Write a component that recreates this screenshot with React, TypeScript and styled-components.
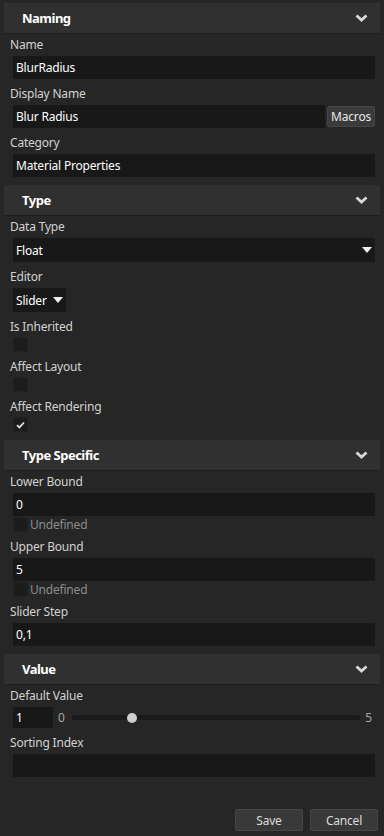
import React from 'react'
import styled, { createGlobalStyle } from 'styled-components'

const GlobalStyle = createGlobalStyle`
  html, body {
    margin: 0;
    padding: 0;
    background: #262626;
  }
  body {
    font-family: "Noto Sans", "Open Sans", sans-serif;
    font-size: 12px;
    letter-spacing: -0.2px;
    color: #d0d0d0;
  }
`

const Page = styled.div`
  width: 384px;
  min-height: 836px;
  box-sizing: border-box;
  padding: 3px 4px 0 4px;
  display: flex;
  flex-direction: column;
`
const SectionHeader = styled.div`
  height: 31px;
  box-sizing: border-box;
  background: #303030;
  border-bottom: 1px solid #1e1e1e;
  display: flex;
  align-items: center;
  justify-content: space-between;
  padding: 0 12px 0 18px;
  color: #fff;
  font-size: 13px;
  font-weight: 700;
  letter-spacing: -0.5px;
`
const SectionBody = styled.div`
  display: flex;
  flex-direction: column;
  gap: 5px;
  padding: 1px 5px 8px 6px;
`
const Field = styled.div`
  display: flex;
  flex-direction: column;
`
const Label = styled.div<{ $tight?: boolean }>`
  line-height: 17px;
  height: 17px;
  padding-top: 1px;
  box-sizing: border-box;
  margin-bottom: ${(p) => (p.$tight ? 3 : 4)}px;
  color: #d2d2d2;
  white-space: nowrap;
`
const Row = styled.div`
  display: flex;
  align-items: center;
  margin-left: 3px;
`
const TextBox = styled.div<{ $width?: number }>`
  height: 23px;
  box-sizing: border-box;
  background: #181818;
  color: #fff;
  padding: 0 3px;
  display: flex;
  align-items: center;
  flex: ${(p) => (p.$width ? `0 0 ${p.$width}px` : '1')};
`
const Select = styled(TextBox)`
  height: 24px;
  justify-content: space-between;
  padding-right: 3px;
`
const Caret = styled.span`
  width: 0;
  height: 0;
  border-left: 5px solid transparent;
  border-right: 5px solid transparent;
  border-top: 6px solid #f0f0f0;
  margin-left: 6px;
`
const SmallButton = styled.button`
  height: 21px;
  margin-left: 2px;
  padding: 0 3px;
  background: #3a3a3a;
  border: 1px solid #464646;
  border-radius: 2px;
  color: #e8e8e8;
  font-family: inherit;
  font-size: 12px;
  letter-spacing: inherit;
`
const Check = styled.div`
  width: 15px;
  height: 15px;
  box-sizing: border-box;
  background: #1c1c1c;
  border: 1px solid #222;
  display: flex;
  align-items: center;
  justify-content: center;
  flex: 0 0 auto;
`
const CheckRow = styled(Row)`
  margin-top: 1px;
  gap: 2px;
`
const Hint = styled.span`
  color: #8c8c8c;
  line-height: 15px;
`
const SliderRow = styled(Row)`
  height: 21px;
`
const SliderEnd = styled.span<{ $end?: boolean }>`
  color: #a8a8a8;
  padding: ${(p) => (p.$end ? '0 3px 0 5px' : '0 7px 0 5px')};
`
const Track = styled.div`
  flex: 1;
  height: 5px;
  border-radius: 3px;
  background: #1a1a1a;
  position: relative;
`
const Thumb = styled.div`
  position: absolute;
  top: 50%;
  width: 10px;
  height: 10px;
  border-radius: 50%;
  background: #cfcfcf;
  transform: translate(-50%, -50%);
`
const Spacer = styled.div`
  flex: 1;
`
const Footer = styled.div`
  display: flex;
  justify-content: flex-end;
  gap: 7px;
  padding: 0 2px 5px 0;
`
const FooterButton = styled.button`
  width: 68px;
  height: 22px;
  background: #393939;
  border: 1px solid #454545;
  border-radius: 2px;
  color: #dcdcdc;
  font-family: inherit;
  font-size: 12px;
  letter-spacing: inherit;
`

const Chevron = () => (
  <svg width="13" height="8" viewBox="0 0 13 8">
    <path d="M1.5 1.5 L6.5 6 L11.5 1.5" fill="none" stroke="#d8d8d8" strokeWidth="2.8" />
  </svg>
)

const Tick = () => (
  <svg width="9" height="8" viewBox="0 0 9 8">
    <path d="M1 4.2 L3.4 6.4 L8 1.5" fill="none" stroke="#e0e0e0" strokeWidth="1.8" />
  </svg>
)

const Section: React.FC<{ title: string; children: React.ReactNode }> = ({ title, children }) => (
  <>
    <SectionHeader>
      <span>{title}</span>
      <Chevron />
    </SectionHeader>
    <SectionBody>{children}</SectionBody>
  </>
)

const TextField: React.FC<{ label: string; value: string }> = ({ label, value }) => (
  <Field>
    <Label>{label}</Label>
    <Row>
      <TextBox>{value}</TextBox>
    </Row>
  </Field>
)

const CheckField: React.FC<{ label: string; checked?: boolean }> = ({ label, checked }) => (
  <Field>
    <Label $tight>{label}</Label>
    <Row>
      <Check>{checked && <Tick />}</Check>
    </Row>
  </Field>
)

const BoundField: React.FC<{ label: string; value: string }> = ({ label, value }) => (
  <Field>
    <Label>{label}</Label>
    <Row>
      <TextBox>{value}</TextBox>
    </Row>
    <CheckRow>
      <Check />
      <Hint>Undefined</Hint>
    </CheckRow>
  </Field>
)

export default function App() {
  const min = 0
  const max = 5
  const value = 1
  const ratio = (value - min) / (max - min)
  return (
    <>
      <GlobalStyle />
      <Page>
        <Section title="Naming">
          <TextField label="Name" value="BlurRadius" />
          <Field>
            <Label>Display Name</Label>
            <Row>
              <TextBox>Blur Radius</TextBox>
              <SmallButton>Macros</SmallButton>
            </Row>
          </Field>
          <TextField label="Category" value="Material Properties" />
        </Section>

        <Section title="Type">
          <Field>
            <Label>Data Type</Label>
            <Row>
              <Select>
                Float
                <Caret />
              </Select>
            </Row>
          </Field>
          <Field>
            <Label>Editor</Label>
            <Row>
              <Select $width={52}>
                Slider
                <Caret />
              </Select>
            </Row>
          </Field>
          <CheckField label="Is Inherited" />
          <CheckField label="Affect Layout" />
          <CheckField label="Affect Rendering" checked />
        </Section>

        <Section title="Type Specific">
          <BoundField label="Lower Bound" value="0" />
          <BoundField label="Upper Bound" value="5" />
          <TextField label="Slider Step" value="0,1" />
        </Section>

        <Section title="Value">
          <Field>
            <Label>Default Value</Label>
            <SliderRow>
              <TextBox $width={40} style={{ height: 21 }}>
                {value}
              </TextBox>
              <SliderEnd>{min}</SliderEnd>
              <Track>
                <Thumb style={{ left: `calc(5px + (100% - 10px) * ${ratio})` }} />
              </Track>
              <SliderEnd $end>{max}</SliderEnd>
            </SliderRow>
          </Field>
          <TextField label="Sorting Index" value="" />
        </Section>

        <Spacer />
        <Footer>
          <FooterButton>Save</FooterButton>
          <FooterButton>Cancel</FooterButton>
        </Footer>
      </Page>
    </>
  )
}
